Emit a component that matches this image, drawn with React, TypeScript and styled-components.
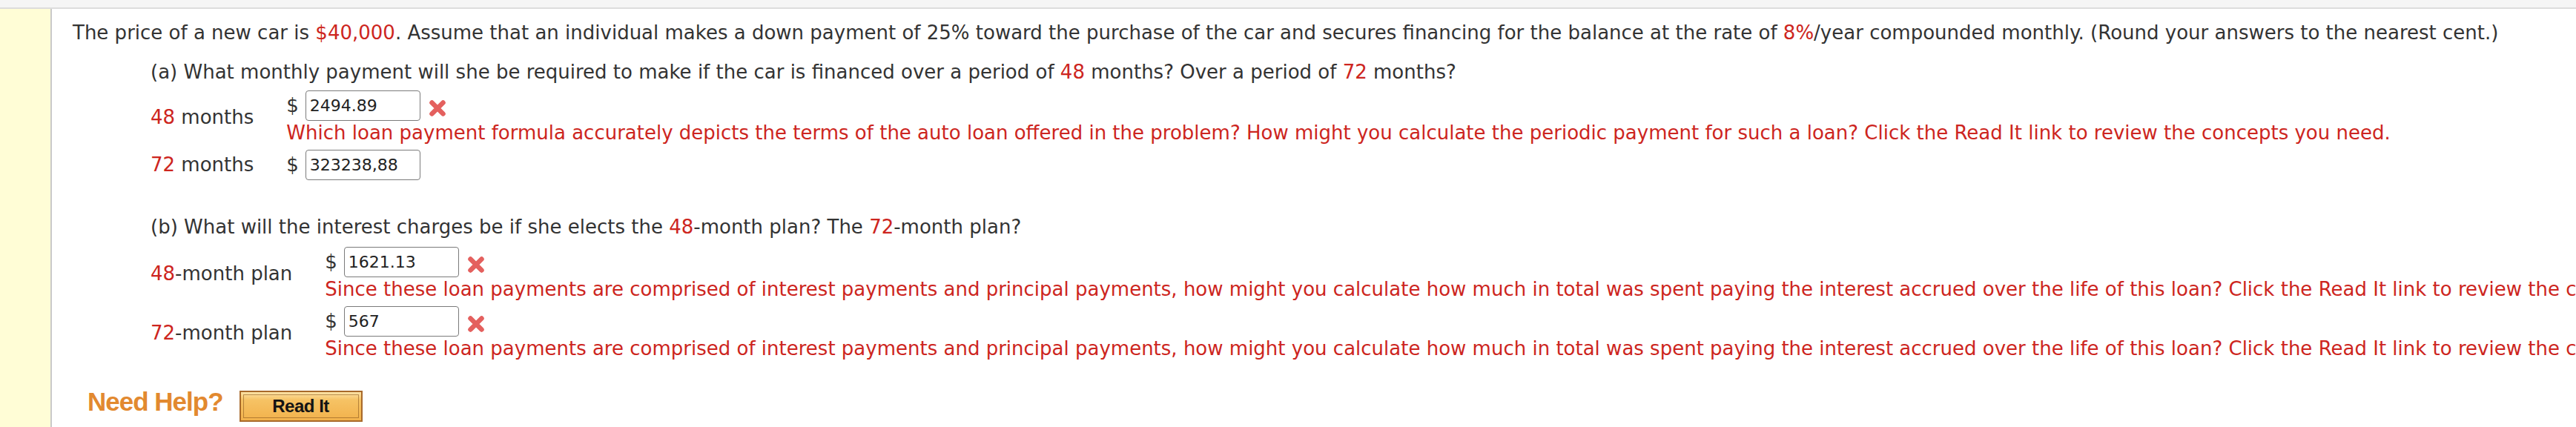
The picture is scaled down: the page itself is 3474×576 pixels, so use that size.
import React from "react";
import styled, { createGlobalStyle } from "styled-components";

const GlobalStyle = createGlobalStyle`
  html, body {
    margin: 0;
    padding: 0;
    background: #ffffff;
  }
  body {
    width: 3474px;
    height: 576px;
    overflow: hidden;
    font-family: "DejaVu Sans", Verdana, sans-serif;
  }
`;

const Page = styled.div`
  display: flex;
  flex-direction: column;
  width: 3474px;
  height: 576px;
  overflow: hidden;
`;

const TopBar = styled.div`
  flex: none;
  height: 10px;
  background: #f5f5f5;
  border-bottom: 2px solid #dcdcdc;
`;

const Main = styled.div`
  display: flex;
  flex: 1;
  min-height: 0;
`;

const Gutter = styled.div`
  flex: none;
  width: 68px;
  background: #fffdd6;
  border-right: 2px solid #c9c9c9;
`;

const Content = styled.div`
  flex: 1;
  min-width: 0;
  padding: 17px 0 0 28px;
  font-family: "DejaVu Sans", Verdana, sans-serif;
  font-size: 26px;
  line-height: 31px;
  color: #333333;
  white-space: nowrap;
  overflow: hidden;
`;

const Paragraph = styled.div``;

const Red = styled.span`
  color: #cd2520;
`;

const Part = styled.div<{ $top: number }>`
  margin-left: 105px;
  margin-top: ${(p) => p.$top}px;
`;

const Question = styled.div``;

const AnswerGrid = styled.div<{ $top: number }>`
  display: grid;
  grid-template-columns: auto 1fr;
  column-gap: 44px;
  row-gap: 7px;
  align-items: center;
  margin-top: ${(p) => p.$top}px;
`;

const Label = styled.div``;

const AnswerCell = styled.div`
  display: flex;
  flex-direction: column;
`;

const AnswerLine = styled.div`
  display: flex;
  align-items: center;
  height: 41px;
`;

const Dollar = styled.span`
  margin-right: 9px;
`;

const AnswerBox = styled.input`
  box-sizing: border-box;
  width: 155px;
  height: 41px;
  margin: 0;
  padding: 0 5px;
  border: 1.5px solid #7b7b7b;
  border-radius: 4px;
  background: #ffffff;
  font-family: "DejaVu Sans", "Lucida Grande", sans-serif;
  font-size: 22px;
  color: #222222;
  outline: none;
`;

const WrongIcon = styled.svg`
  width: 26px;
  height: 26px;
  margin-left: 10px;
  margin-top: 6px;
  filter: blur(0.35px);
`;

const Hint = styled.div`
  margin-top: 1px;
  color: #cd2520;
`;

const HelpRow = styled.div`
  display: flex;
  align-items: flex-start;
  gap: 22px;
  margin-top: 36px;
  margin-left: 20px;
`;

const NeedHelp = styled.span`
  font-family: "Liberation Sans", Arial, sans-serif;
  font-weight: bold;
  font-size: 35px;
  line-height: 40px;
  letter-spacing: -1px;
  color: #e2892f;
`;

const ReadItButton = styled.button`
  box-sizing: border-box;
  display: flex;
  width: 166px;
  height: 42px;
  margin: 5px 0 0 0;
  padding: 3px;
  border: 2px solid #a8692a;
  background: linear-gradient(to bottom, #fde3a7 0%, #f6c264 28%, #f2b24c 100%);
  cursor: pointer;
`;

const ReadItFace = styled.span`
  flex: 1;
  display: flex;
  align-items: center;
  justify-content: center;
  border: 1px solid rgba(130, 80, 25, 0.55);
  font-family: "Liberation Sans", Arial, sans-serif;
  font-weight: bold;
  font-size: 24px;
  letter-spacing: -0.5px;
  color: #141414;
`;

const WrongMark = () => (
  <WrongIcon viewBox="0 0 26 26" aria-hidden="true">
    <path
      d="M5.5 5.5 L20.5 20.5 M20.5 5.5 L5.5 20.5"
      stroke="#e4605e"
      strokeWidth="6.5"
      strokeLinecap="round"
      fill="none"
    />
  </WrongIcon>
);

type Row = {
  label: React.ReactNode;
  value: string;
  wrong: boolean;
  hint?: string;
};

const hintA =
  "Which loan payment formula accurately depicts the terms of the auto loan offered in the problem? How might you calculate the periodic payment for such a loan? Click the Read It link to review the concepts you need.";
const hintB =
  "Since these loan payments are comprised of interest payments and principal payments, how might you calculate how much in total was spent paying the interest accrued over the life of this loan? Click the Read It link to review the concepts you need.";

const rowsA: Row[] = [
  { label: <><Red>48</Red> months</>, value: "2494.89", wrong: true, hint: hintA },
  { label: <><Red>72</Red> months</>, value: "323238,88", wrong: false },
];

const rowsB: Row[] = [
  { label: <><Red>48</Red>-month plan</>, value: "1621.13", wrong: true, hint: hintB },
  { label: <><Red>72</Red>-month plan</>, value: "567", wrong: true, hint: hintB },
];

const Answers = ({ rows, top }: { rows: Row[]; top: number }) => (
  <AnswerGrid $top={top}>
    {rows.map((r, i) => (
      <React.Fragment key={i}>
        <Label>{r.label}</Label>
        <AnswerCell>
          <AnswerLine>
            <Dollar>$</Dollar>
            <AnswerBox readOnly value={r.value} />
            {r.wrong && <WrongMark />}
          </AnswerLine>
          {r.hint && <Hint>{r.hint}</Hint>}
        </AnswerCell>
      </React.Fragment>
    ))}
  </AnswerGrid>
);

export default function App() {
  return (
    <>
      <GlobalStyle />
      <Page>
        <TopBar />
        <Main>
          <Gutter />
          <Content>
            <Paragraph>
              The price of a new car is <Red>$40,000</Red>. Assume that an individual makes a down payment of 25% toward
              the purchase of the car and secures financing for the balance at the rate of <Red>8%</Red>/year compounded
              monthly. (Round your answers to the nearest cent.)
            </Paragraph>
            <Part $top={22}>
              <Question>
                (a) What monthly payment will she be required to make if the car is financed over a period of{" "}
                <Red>48</Red> months? Over a period of <Red>72</Red> months?
              </Question>
              <Answers rows={rowsA} top={9} />
            </Part>
            <Part $top={48}>
              <Question>
                (b) What will the interest charges be if she elects the <Red>48</Red>-month plan? The <Red>72</Red>
                -month plan?
              </Question>
              <Answers rows={rowsB} top={11} />
            </Part>
            <HelpRow>
              <NeedHelp>Need Help?</NeedHelp>
              <ReadItButton type="button">
                <ReadItFace>Read It</ReadItFace>
              </ReadItButton>
            </HelpRow>
          </Content>
        </Main>
      </Page>
    </>
  );
}
